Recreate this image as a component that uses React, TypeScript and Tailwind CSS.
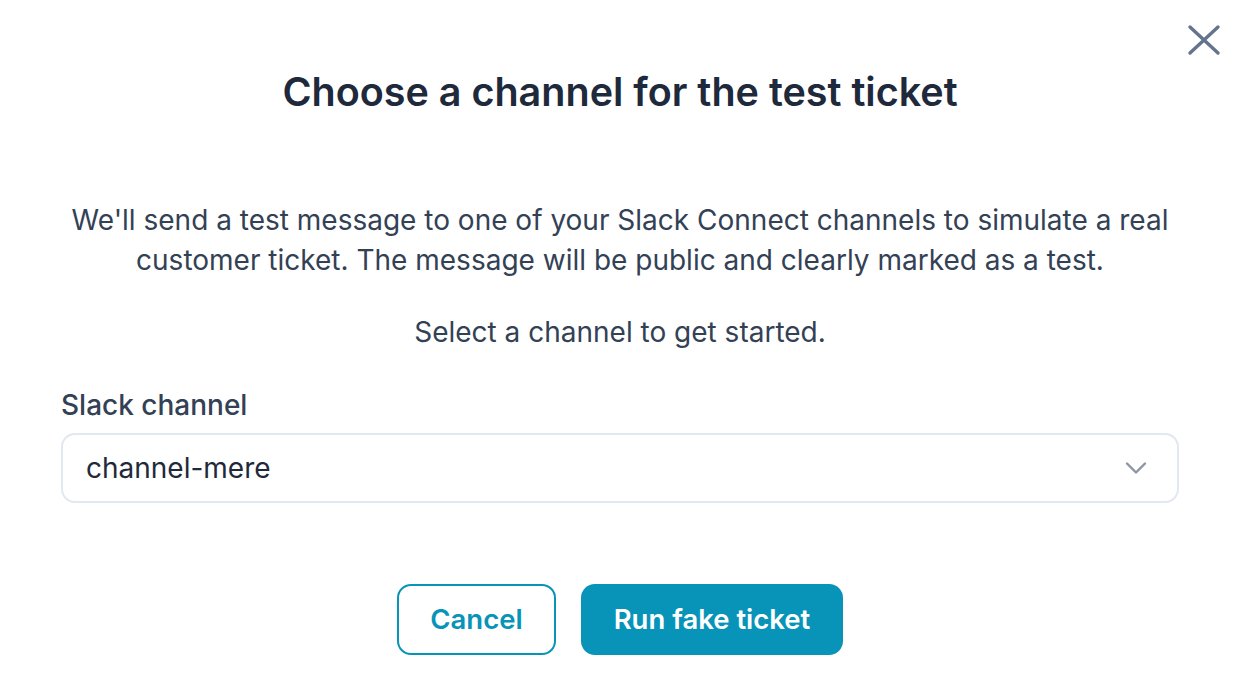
import { ChevronDown } from 'lucide-react';

export default function App() {
  return (
    <div className="relative w-[1256px] h-[688px] bg-white font-['Inter',sans-serif] text-[#334155]">
      <button className="absolute left-[1186px] top-[24px] text-[#64748b]">
        <svg width="36" height="32" viewBox="0 0 36 32" fill="none" stroke="currentColor" strokeWidth="3.4" strokeLinecap="round">
          <path d="M4 3 L32 29 M32 3 L4 29" />
        </svg>
      </button>

      <div className="flex flex-col pl-[61px] pr-[77px] pt-[68px]">
        <h1 className="text-center text-[39.5px] leading-[48px] font-semibold text-[#1e293b]">
          Choose a channel for the test ticket
        </h1>

        <p className="mt-[84px] text-center text-[28px] leading-[40px]">
          We'll send a test message to one of your Slack Connect channels to simulate a real
          customer ticket. The message will be public and clearly marked as a test.
        </p>

        <p className="mt-[32px] text-center text-[28px] leading-[40px]">
          Select a channel to get started.
        </p>

        <label className="mt-[33px] text-[28px] leading-[40px] font-medium">Slack channel</label>

        <div className="mt-[8px] h-[70px] flex items-center justify-between rounded-[14px] border-2 border-[#e2e8f0] pl-[23px] pr-[23px]">
          <span className="text-[28px] text-[#1e293b]">channel-mere</span>
          <ChevronDown size={36} strokeWidth={1.6} className="text-[#8b95a5]" />
        </div>

        <div className="mt-[81px] flex justify-center gap-[25px]">
          <button className="h-[71px] w-[159px] rounded-[14px] border-2 border-[#0893b8] text-[27.5px] font-semibold text-[#0893b8]">
            Cancel
          </button>
          <button className="h-[71px] w-[262px] rounded-[14px] bg-[#0893b8] text-[27.5px] font-semibold text-white">
            Run fake ticket
          </button>
        </div>
      </div>
    </div>
  );
}
